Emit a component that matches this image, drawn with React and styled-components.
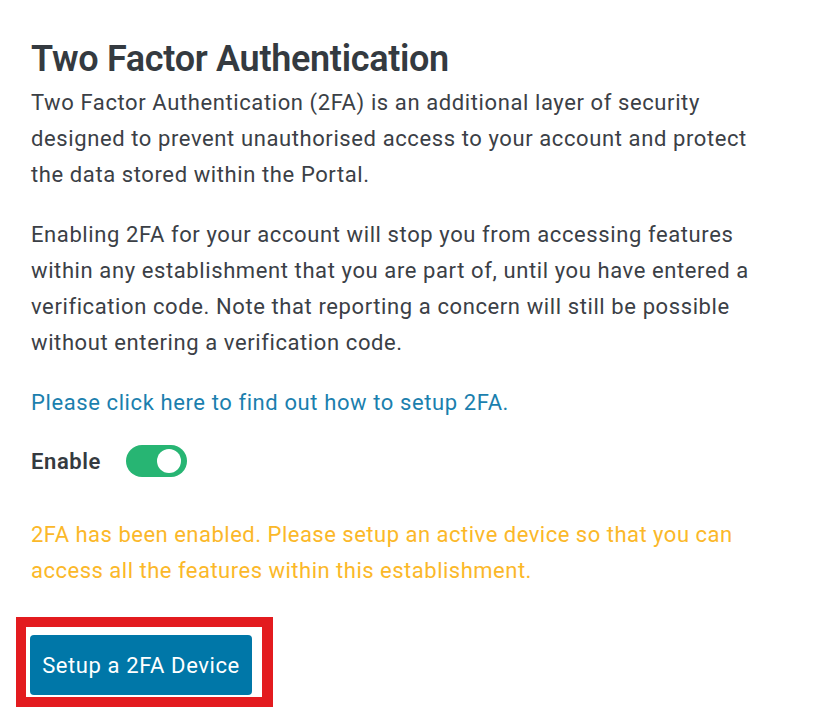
import styled, { createGlobalStyle } from 'styled-components';

const GlobalStyle = createGlobalStyle`
    body {
        margin: 0;
        background: #ffffff;
        font-family: 'Roboto', 'Liberation Sans', sans-serif;
    }
`;

function App() {
    return (
        <Page>
            <GlobalStyle />
            <Title>Two Factor Authentication</Title>
            <Paragraph>
                Two Factor Authentication (2FA) is an additional layer of security designed to prevent
                unauthorised access to your account and protect the data stored within the Portal.
            </Paragraph>
            <Paragraph>
                Enabling 2FA for your account will stop you from accessing features within any
                establishment that you are part of, until you have entered a verification code. Note that
                reporting a concern will still be possible without entering a verification code.
            </Paragraph>
            <Paragraph>
                <Link href="#">Please click here to find out how to setup 2FA.</Link>
            </Paragraph>
            <ToggleRow>
                <ToggleLabel>Enable</ToggleLabel>
                <Switch role="switch" aria-checked="true">
                    <Knob />
                </Switch>
            </ToggleRow>
            <Notice>
                2FA has been enabled. Please setup an active device so that you can access all the
                features within this establishment.
            </Notice>
            <Highlight>
                <Button type="button">Setup a 2FA Device</Button>
            </Highlight>
        </Page>
    );
}

export default App;

//---- STYLING ----//
const Page = styled.div`
    width: 754px;
    padding: 37px 0 0 31px;
    color: #343a40;
`;

const Title = styled.h2`
    margin: 0 0 4px;
    font-size: 36px;
    font-weight: 600;
    line-height: 44px;
    letter-spacing: -0.3px;
    color: #343a40;
`;

const Paragraph = styled.p`
    margin: 0 0 24px;
    font-size: 22px;
    line-height: 36px;
    letter-spacing: 0.6px;
    color: #3b4046;
`;

const Link = styled.a`
    color: #1b7fae;
    text-decoration: none;
`;

const ToggleRow = styled.div`
    display: flex;
    align-items: center;
    gap: 25px;
`;

const ToggleLabel = styled.span`
    font-size: 22px;
    font-weight: 600;
    letter-spacing: 0.6px;
    color: #343a40;
`;

const Switch = styled.div`
    position: relative;
    width: 61px;
    height: 32px;
    border-radius: 16px;
    background: #27b573;
`;

const Knob = styled.span`
    position: absolute;
    top: 4px;
    right: 6px;
    width: 24px;
    height: 24px;
    border-radius: 50%;
    background: #ffffff;
`;

const Notice = styled.p`
    margin: 40px 0 0;
    font-size: 22px;
    line-height: 36px;
    letter-spacing: 0.5px;
    color: #fbb829;
`;

const Highlight = styled.div`
    display: inline-block;
    margin: 28px 0 0 -15px;
    padding: 8px 10px 2px 4px;
    border: 10px solid #e31b1f;
    border-right-width: 11px;
`;

const Button = styled.button`
    display: block;
    width: 222px;
    height: 60px;
    border: none;
    border-radius: 4px;
    background: #0077a8;
    color: #ffffff;
    font-family: 'Roboto', 'Liberation Sans', sans-serif;
    font-size: 22px;
    letter-spacing: 0.6px;
    padding: 0;
    cursor: pointer;
`;
